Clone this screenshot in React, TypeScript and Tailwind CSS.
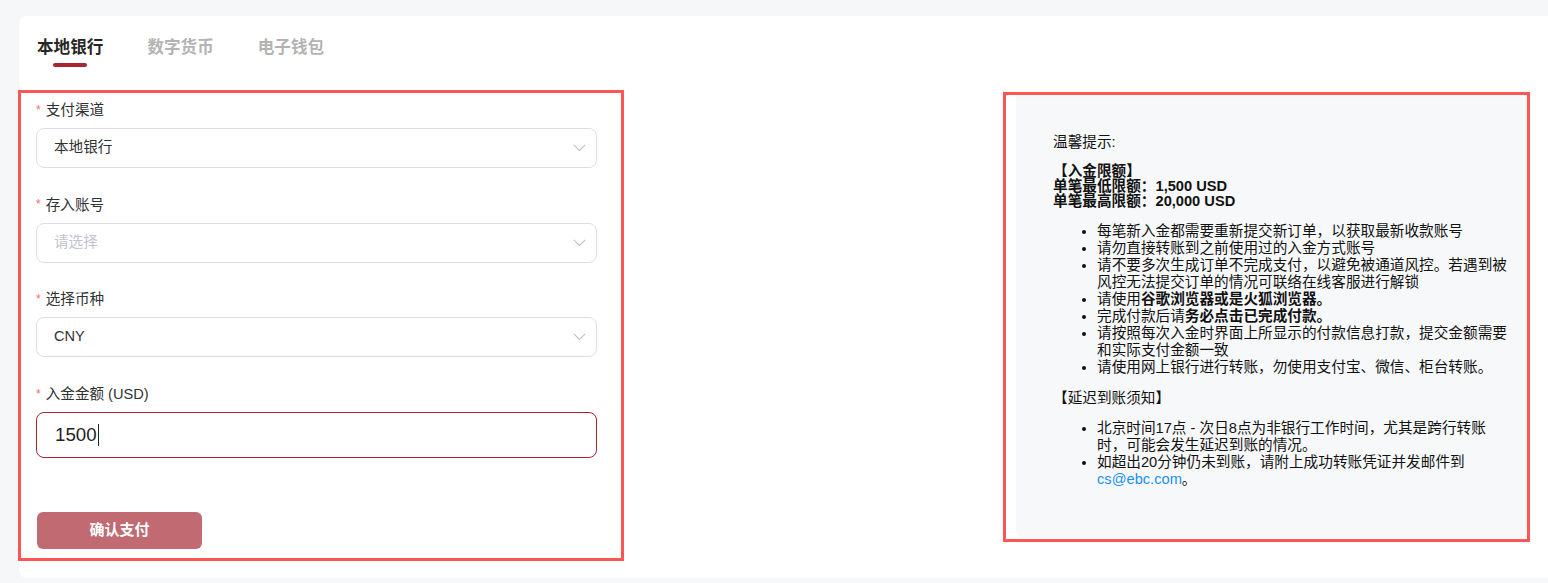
import React from 'react';

const FONT = "font-['Liberation_Sans','Noto_Sans_CJK_SC',sans-serif]";

const tabs = ['本地银行', '数字货币', '电子钱包'];

const Chevron = () => (
  <svg width="13" height="8" viewBox="0 0 13 8" fill="none" stroke="#c0c4cc" strokeWidth={1.2}>
    <polyline points="0.8,0.8 6.5,6.5 12.2,0.8" />
  </svg>
);

interface FieldProps {
  label: string;
  children: React.ReactNode;
  last?: boolean;
}

const Field: React.FC<FieldProps> = ({ label, children, last }) => (
  <div className={last ? '' : 'mb-[25.7px]'}>
    <div className="flex items-center h-[22px] pt-[2px] text-[14.6px] text-[#303133]">
      <span className="w-[9.7px] text-[12px] text-[#f56c6c] -mt-[3px]">*</span>
      {label}
    </div>
    <div className="mt-[7px]">{children}</div>
  </div>
);

const SelectBox: React.FC<{ value?: string; placeholder?: string }> = ({ value, placeholder }) => (
  <div className="flex items-center justify-between h-[40px] pl-[17px] pr-[10px] rounded-[8px] border border-[#dcdfe6] bg-white text-[14.6px]">
    <span className={value ? 'text-[#303133]' : 'text-[#c0c4cc]'}>{value ?? placeholder}</span>
    <Chevron />
  </div>
);

export default function App() {
  return (
    <div className={`h-[583px] overflow-hidden bg-[#f6f7f9] pt-[16px] pl-[19px] ${FONT}`}>
      <div className="h-[562px] bg-white rounded-l-[8px]">
        {/* Tabs */}
        <div className="flex gap-[44px] pl-[18px] pt-[20px]">
          {tabs.map((t, i) => (
            <div key={t} className="flex flex-col items-center">
              <span
                className={`text-[16.6px] leading-[24px] font-bold ${
                  i === 0 ? 'text-[#262626]' : 'text-[#b3b3b3]'
                }`}
              >
                {t}
              </span>
              <span
                className={`mt-[3px] h-[4px] w-[34px] rounded-full ${
                  i === 0 ? 'bg-[#a8262f]' : 'bg-transparent'
                }`}
              />
            </div>
          ))}
        </div>

        <div className="flex items-start justify-between pr-[18px] mt-[23px]">
          {/* Deposit form */}
          <div className="-ml-px w-[606px] border-[3px] border-[#fe5555] pl-[15px] pr-[24px] pt-[6px] pb-[9px]">
            <Field label="支付渠道">
              <SelectBox value="本地银行" />
            </Field>
            <Field label="存入账号">
              <SelectBox placeholder="请选择" />
            </Field>
            <Field label="选择币种">
              <SelectBox value="CNY" />
            </Field>
            <Field label="入金金额 (USD)" last>
              <div className="flex items-center h-[46px] pl-[18px] rounded-[8px] border border-[#a8262f] text-[18.7px] text-[#222]">
                <span>1500</span>
                <span className="ml-px h-[22px] w-px bg-[#222]" />
              </div>
            </Field>
            <button className="mt-[54px] ml-px h-[37px] w-[165px] rounded-[6px] bg-[#c16a72] text-white text-[15px] font-bold">
              确认支付
            </button>
          </div>

          {/* Tips */}
          <div className="mt-[2px] w-[527px] border-[3px] border-[#fe5555] pl-[10px]">
            <div className="bg-[#f7f8fa] rounded-b-[8px] pl-[37px] pr-[14px] pt-[39px] pb-[51px] text-[14.65px] text-[#111]">
              <p className="leading-[16px]">温馨提示:</p>
              <p className="mt-[14px] leading-[15px] font-bold">
                【入金限额】
                <br />
                单笔最低限额：1,500 USD
                <br />
                单笔最高限额：20,000 USD
              </p>
              <ul className="mt-[14px] list-disc pl-[44px] leading-[17px]">
                <li>每笔新入金都需要重新提交新订单，以获取最新收款账号</li>
                <li>请勿直接转账到之前使用过的入金方式账号</li>
                <li>请不要多次生成订单不完成支付，以避免被通道风控。若遇到被风控无法提交订单的情况可联络在线客服进行解锁</li>
                <li>
                  请使用<b>谷歌浏览器或是火狐浏览器。</b>
                </li>
                <li>
                  完成付款后请<b>务必点击已完成付款。</b>
                </li>
                <li>请按照每次入金时界面上所显示的付款信息打款，提交金额需要和实际支付金额一致</li>
                <li>请使用网上银行进行转账，勿使用支付宝、微信、柜台转账。</li>
              </ul>
              <p className="mt-[14px] leading-[16px]">【延迟到账须知】</p>
              <ul className="mt-[14px] list-disc pl-[44px] leading-[17px]">
                <li>北京时间17点 - 次日8点为非银行工作时间，尤其是跨行转账时，可能会发生延迟到账的情况。</li>
                <li>
                  如超出20分钟仍未到账，请附上成功转账凭证并发邮件到
                  <span className="text-[#1890ff]">cs@ebc.com</span>。
                </li>
              </ul>
            </div>
          </div>
        </div>
      </div>
    </div>
  );
}
